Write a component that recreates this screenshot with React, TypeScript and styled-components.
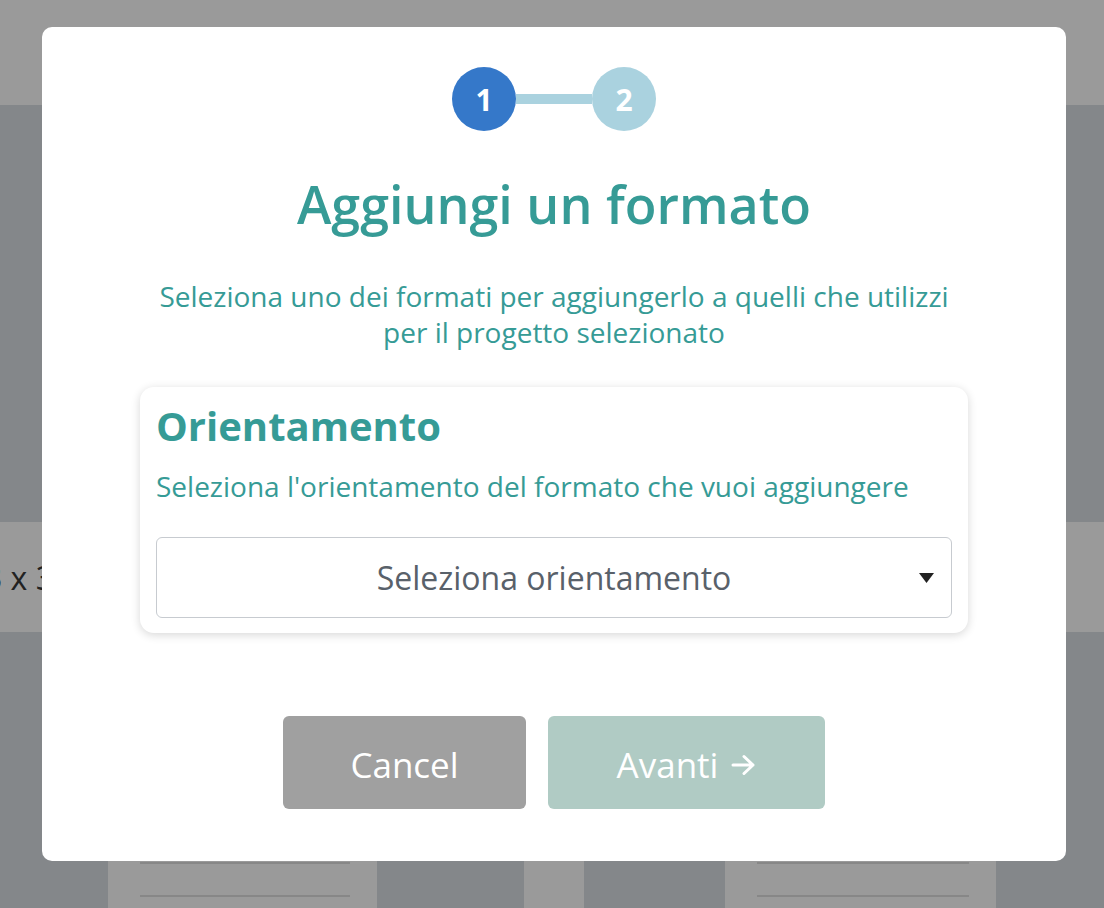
import React from "react";
import styled, { createGlobalStyle } from "styled-components";

const GlobalStyle = createGlobalStyle`
  html, body {
    margin: 0;
    padding: 0;
    height: 100%;
    overflow: hidden;
  }
  body {
    font-family: "Open Sans", "Liberation Sans", sans-serif;
    background: #84878a;
  }
  * {
    box-sizing: border-box;
  }
`;

const Page = styled.div`
  width: 1104px;
  height: 908px;
  display: flex;
  flex-direction: column;
  background: #84878a;
  overflow: hidden;
`;

const TopBar = styled.div`
  height: 105px;
  flex-shrink: 0;
  background: #9a9a9a;
`;

const Main = styled.div`
  flex: 1;
  padding-top: 417px;
  display: flex;
  flex-direction: column;
`;

const Band = styled.div`
  height: 110px;
  flex-shrink: 0;
  background: #9a9a9a;
  display: flex;
  align-items: center;
  font-size: 32px;
  color: #222;
  span {
    margin-left: -16px;
  }
`;

const CardsRow = styled.div`
  margin-top: 20px;
  display: grid;
  grid-template-columns: 108px 269px 147px 60px 141px 271px 1fr;
  flex: 1;
`;

const BgCell = styled.div<{ $light?: boolean }>`
  background: ${(p) => (p.$light ? "#9a9a9a" : "#84878a")};
  display: flex;
  flex-direction: column;
  padding: 210px 27px 0 32px;
`;

const BgLine = styled.div`
  height: 33px;
  flex-shrink: 0;
  border-top: 2px solid #878787;
`;

const Overlay = styled.div`
  position: fixed;
  inset: 0;
  display: flex;
  justify-content: center;
  align-items: flex-start;
  padding: 27px 0 0 4px;
`;

const Modal = styled.div`
  width: 1024px;
  height: 834px;
  background: #fff;
  border-radius: 10px;
  display: flex;
  flex-direction: column;
  align-items: center;
  padding-top: 40px;
`;

const Stepper = styled.div`
  display: flex;
  align-items: center;
`;

const StepDot = styled.div<{ $active?: boolean }>`
  width: 64px;
  height: 64px;
  border-radius: 50%;
  background: ${(p) => (p.$active ? "#3578c9" : "#aad2df")};
  color: #fff;
  font-size: 30px;
  font-weight: 700;
  display: flex;
  align-items: center;
  justify-content: center;
`;

const StepLink = styled.div`
  width: 76px;
  height: 10px;
  background: #aad2df;
`;

const Title = styled.h1`
  margin: 41px 0 0;
  font-size: 52px;
  font-weight: 600;
  line-height: 64px;
  color: #369b96;
`;

const Lead = styled.p`
  margin: 42px 0 0;
  width: 810px;
  text-align: center;
  font-size: 28px;
  line-height: 36px;
  color: #369b96;
`;

const Card = styled.div`
  margin-top: 37px;
  width: 828px;
  border-radius: 14px;
  background: #fff;
  box-shadow: 0 2px 10px rgba(0, 0, 0, 0.16);
  padding: 14px 16px 15px 16px;
  display: flex;
  flex-direction: column;
`;

const CardTitle = styled.h2`
  margin: 0;
  font-size: 40px;
  font-weight: 700;
  line-height: 50px;
  color: #369b96;
`;

const CardText = styled.p`
  margin: 17px 0 0;
  font-size: 28px;
  line-height: 36px;
  color: #369b96;
`;

const Select = styled.div`
  margin-top: 33px;
  height: 81px;
  border: 1.5px solid #c7cbd0;
  border-radius: 6px;
  position: relative;
  display: flex;
  align-items: center;
  justify-content: center;
  font-size: 32px;
  color: #59616a;
`;

const Caret = styled.svg`
  position: absolute;
  right: 17px;
  top: 35px;
`;

const Actions = styled.div`
  margin-top: 83px;
  display: flex;
  gap: 22px;
`;

const Button = styled.button<{ $variant: "cancel" | "next" }>`
  height: 93px;
  width: ${(p) => (p.$variant === "cancel" ? "243px" : "277px")};
  border: none;
  border-radius: 6px;
  background: ${(p) => (p.$variant === "cancel" ? "#a0a0a0" : "#b0cbc4")};
  color: #fff;
  font-family: "Open Sans", "Liberation Sans", sans-serif;
  font-size: 35px;
  font-weight: 400;
  display: flex;
  align-items: center;
  justify-content: center;
  gap: 13px;
  padding: 4px 0 0;
`;

export default function App() {
  return (
    <>
      <GlobalStyle />
      <Page>
        <TopBar />
        <Main>
          <Band>
            <span>3 x 3</span>
          </Band>
          <CardsRow>
            <BgCell />
            <BgCell $light>
              <BgLine />
              <BgLine />
            </BgCell>
            <BgCell />
            <BgCell $light />
            <BgCell />
            <BgCell $light>
              <BgLine />
              <BgLine />
            </BgCell>
            <BgCell />
          </CardsRow>
        </Main>
      </Page>
      <Overlay>
        <Modal>
          <Stepper>
            <StepDot $active>1</StepDot>
            <StepLink />
            <StepDot>2</StepDot>
          </Stepper>
          <Title>Aggiungi un formato</Title>
          <Lead>
            Seleziona uno dei formati per aggiungerlo a quelli che utilizzi per il progetto
            selezionato
          </Lead>
          <Card>
            <CardTitle>Orientamento</CardTitle>
            <CardText>Seleziona l'orientamento del formato che vuoi aggiungere</CardText>
            <Select>
              Seleziona orientamento
              <Caret width="15" height="10" viewBox="0 0 15 10">
                <path d="M0 0 L15 0 L7.5 10 Z" fill="#222" />
              </Caret>
            </Select>
          </Card>
          <Actions>
            <Button $variant="cancel">Cancel</Button>
            <Button $variant="next">
              Avanti
              <svg width="25" height="22" viewBox="0 0 25 22" fill="none" stroke="#fff" strokeWidth="3" strokeLinecap="round" strokeLinejoin="round">
                <path d="M2 11h20M13 2.5l9 8.5-9 8.5" />
              </svg>
            </Button>
          </Actions>
        </Modal>
      </Overlay>
    </>
  );
}
